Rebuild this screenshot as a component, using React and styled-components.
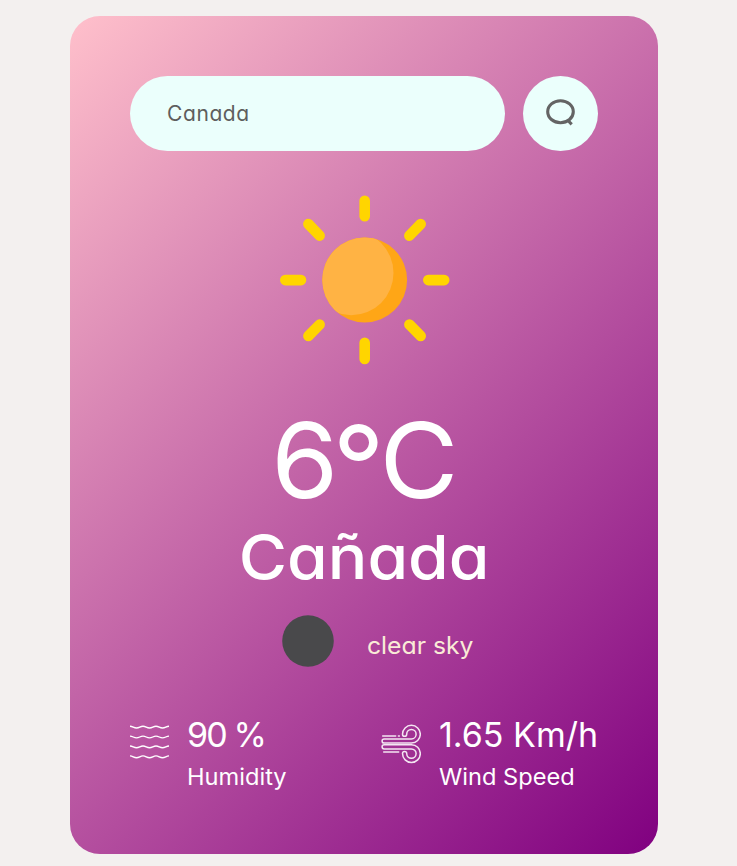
import React from "react";
import styled, { createGlobalStyle } from "styled-components";

const GlobalStyle = createGlobalStyle`
  * { box-sizing: border-box; }
  body {
    margin: 0;
    background: #f3f0ef;
    font-family: Inter, sans-serif;
    font-feature-settings: "cv11" 1;
  }
`;

const Page = styled.main`
  height: 866px;
  padding: 16px 79px 0 70px;
  overflow: hidden;
`;

const Card = styled.section`
  width: 588px;
  height: 838px;
  padding: 60px;
  border-radius: 30px;
  background: linear-gradient(135deg, #ffc0cb, #800080);
  color: #fff;
  display: flex;
  flex-direction: column;
  align-items: center;
`;

const SearchBar = styled.form`
  width: 100%;
  display: flex;
  justify-content: space-between;
`;

const SearchInput = styled.input`
  width: 375px;
  height: 75px;
  padding: 0 37px;
  border: 0;
  outline: 0;
  border-radius: 38px;
  background: #ebfffc;
  color: #5e5e5e;
  font: 400 21px Inter, sans-serif;
  font-feature-settings: "cv11" 1;
  letter-spacing: 0.6px;
`;

const SearchButton = styled.button`
  width: 75px;
  height: 75px;
  padding: 0;
  border: 0;
  border-radius: 50%;
  background: #ebfffc;
  display: grid;
  place-items: center;
`;

const Icon = styled.svg`
  display: block;
  flex: none;
`;

const SunIcon = styled(Icon)`
  margin: 44px 0 0 2px;
`;

const Temperature = styled.h1`
  height: 110px;
  margin: 40px 0 0;
  font-size: 105px;
  font-weight: 430;
  line-height: 110px;
  letter-spacing: -2px;
  white-space: nowrap;
  transform: scaleX(1.03);
`;

const Degree = styled.span`
  margin-left: -4px;
  font-size: 112px;
  line-height: 0;
  vertical-align: -8px;
  letter-spacing: -5px;
`;

const City = styled.h2`
  height: 70px;
  margin: 7px 0 0;
  font-size: 61px;
  font-weight: 450;
  line-height: 70px;
  letter-spacing: 0;
  transform: scaleX(1.08);
`;

const Condition = styled.div`
  width: 100%;
  height: 52px;
  margin-top: 23px;
  padding-left: 152px;
  display: flex;
  gap: 33px;
`;

const Description = styled.p`
  margin: 11px 0 0;
  color: #faebd7;
  font-size: 24px;
  line-height: 40px;
  letter-spacing: 0;
  white-space: nowrap;
  transform: scaleX(1.03);
  transform-origin: left;
`;

const Details = styled.div`
  width: 100%;
  margin-top: 50px;
  display: flex;
  justify-content: space-between;
`;

const Detail = styled.div`
  width: ${(p) => p.$width}px;
  display: flex;
  gap: 18px;
`;

const DetailIcon = styled(Icon)`
  margin-top: 7px;
`;

const DetailText = styled.div`
  white-space: nowrap;
`;

const Value = styled.p`
  margin: 0;
  font-size: 34px;
  line-height: 36px;
  letter-spacing: ${(p) => p.$tracking}px;
`;

const Label = styled.p`
  margin: 9px 0 0;
  font-size: 22.5px;
  line-height: 30px;
  transform: scaleX(1.05);
  transform-origin: left;
`;

function Sun() {
  return (
    <SunIcon width="170" height="170" viewBox="0 0 170 170">
      <defs>
        <clipPath id="disc"><circle cx="84.7" cy="85" r="42.4" /></clipPath>
      </defs>
      <g stroke="#ffd500" strokeWidth="10.6" strokeLinecap="round">
        <path d="M84.7 5.8V21.2M84.7 147.7V163.9M5.3 85.1H21M148.3 85.1H164.2" />
        <path d="M28.4 29L39.6 40.6M129.4 40.6L140.7 29M39.6 129.6L28.4 141M129.4 129.6L140.7 141" />
      </g>
      <circle cx="84.7" cy="85" r="42.4" fill="#ffa616" />
      <circle cx="71.2" cy="78" r="42.3" fill="#ffb344" clipPath="url(#disc)" />
    </SunIcon>
  );
}

function Waves() {
  return (
    <DetailIcon width="39" height="40" viewBox="0 0 39 40" fill="none" stroke="#fff" strokeWidth="1.4">
      {[2.2, 12.1, 22, 31.9].map((y) => (
        <path
          key={y}
          d={`M0 ${y}c3 0 3.5 1.8 6.5 1.8s3.5-1.8 6.5-1.8 3.5 1.8 6.5 1.8 3.5-1.8 6.5-1.8 3.5 1.8 6.5 1.8 3.5-1.8 6.5-1.8`}
        />
      ))}
    </DetailIcon>
  );
}

function Wind() {
  return (
    <DetailIcon width="40" height="40" viewBox="-0.7 -0.7 40 40" fill="none" stroke="#fff" strokeOpacity=".88" strokeWidth="1.5" strokeLinecap="round">
      <path d="M2.5 14.2H29.7a4.7 4.7 0 1 0-4.7-4.7a2.1 2.1 0 0 1-4.2 0a8.9 8.9 0 1 1 8.9 8.9H2.5a2.1 2.1 0 0 1 0-4.2zM1 11.3H14M16.7 11.3h1" />
      <path d="M2.5 24.2H29.7a4.7 4.7 0 1 1-4.7 4.7a2.1 2.1 0 0 0-4.2 0a8.9 8.9 0 1 0 8.9-8.9H2.5a2.1 2.1 0 0 0 0 4.2zM2 27.4H17" />
    </DetailIcon>
  );
}

export default function App() {
  return (
    <>
      <GlobalStyle />
      <Page>
        <Card>
          <SearchBar>
            <SearchInput defaultValue="Canada" aria-label="City" />
            <SearchButton type="button" aria-label="Search">
              <Icon width="32" height="32" viewBox="0 0 32 32" fill="none" stroke="#646464" strokeWidth="3.1">
                <ellipse cx="15.5" cy="13.7" rx="12.8" ry="11" />
                <path d="M22.5 22L26.7 26.3" />
              </Icon>
            </SearchButton>
          </SearchBar>
          <Sun />
          <Temperature>6<Degree>°</Degree>C</Temperature>
          <City>Cañada</City>
          <Condition>
            <Icon width="52" height="52" viewBox="0 0 52 52">
              <circle cx="26" cy="26" r="25.8" fill="#49494b" />
            </Icon>
            <Description>clear sky</Description>
          </Condition>
          <Details>
            <Detail $width={160}>
              <Waves />
              <DetailText>
                <Value $tracking={-1.9}>90 %</Value>
                <Label>Humidity</Label>
              </DetailText>
            </Detail>
            <Detail $width={217}>
              <Wind />
              <DetailText>
                <Value $tracking={0}>1.65 Km/h</Value>
                <Label>Wind Speed</Label>
              </DetailText>
            </Detail>
          </Details>
        </Card>
      </Page>
    </>
  );
}
